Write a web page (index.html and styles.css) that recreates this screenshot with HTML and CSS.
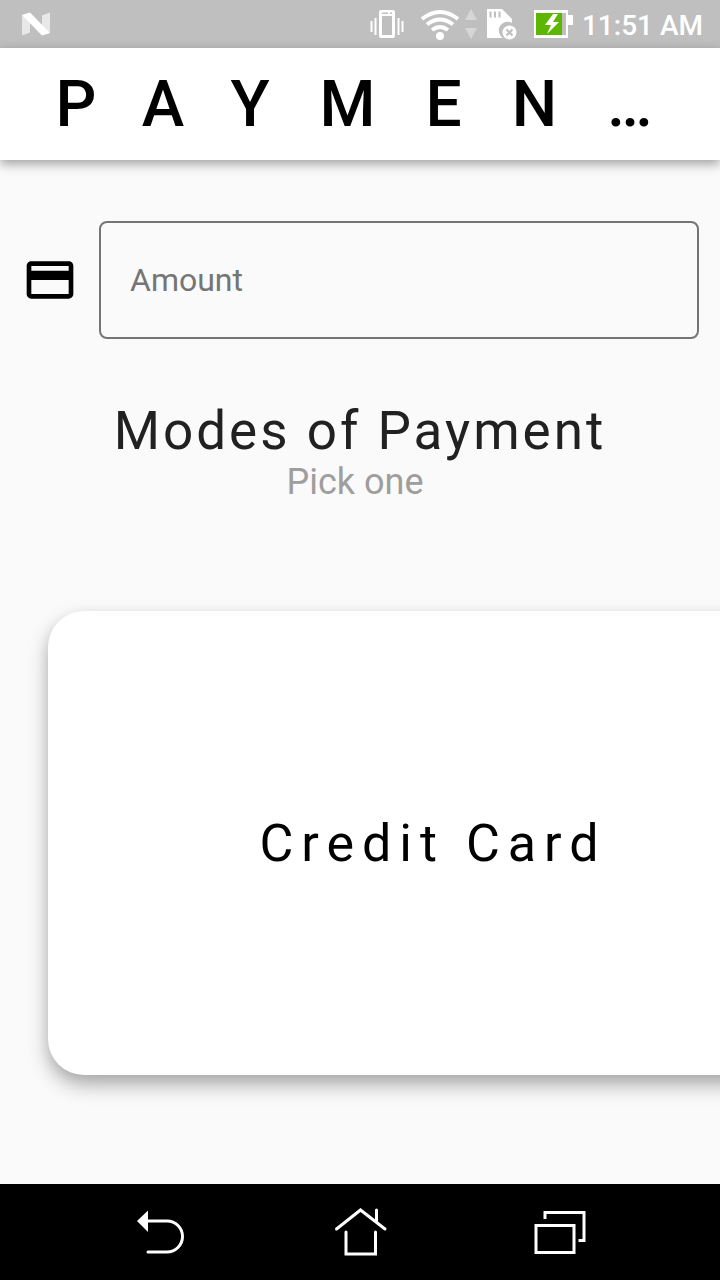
FILE: index.html
```html
<!DOCTYPE html>
<html lang="en">
<head>
<meta charset="utf-8">
<meta name="viewport" content="width=device-width, initial-scale=1">
<title>Payment</title>
<link rel="stylesheet" href="styles.css">
</head>
<body>
<div class="screen">
  <div class="status">
    <svg class="status-logo" width="28" height="24" viewBox="0 0 28 24" aria-hidden="true">
      <path d="M0 3v20.500l8-3V5zM28 .5v20.500l-8-5V3.500z" fill="#e8e8e8"/>
      <path d="M0 3L8 .5l20 20.500-8 2.500z" fill="#fff"/>
    </svg>
    <svg class="status-icons" width="206" height="36" viewBox="0 0 206 36" aria-hidden="true">
      <g fill="#fff">
        <path fill-rule="evenodd" d="M11 4h12a2 2 0 0 1 2 2v24a2 2 0 0 1-2 2H11a2 2 0 0 1-2-2V6a2 2 0 0 1 2-2zm1 6v19h10V10zm0-3.500v1.500h6V6.500zm8 0v1.500h2V6.500z"/>
        <path d="M4.500 12h2v17h-2zM.5 15h2v11h-2zM27.500 12h2v17h-2zM31.500 15h2v11h-2z"/>
        <circle cx="70" cy="30" r="4"/>
        <path d="M117 3h15l10 10v4a8 8 0 0 0-9 15h-16z"/>
        <circle cx="139.500" cy="26.500" r="7"/>
        <path fill-rule="evenodd" d="M164 4h34v5h5v10h-5v13h-34V4zm2 3v22h30V7z"/>
      </g>
      <g fill="none" stroke="#fff" stroke-width="4">
        <path d="M52 13q18-14 36 0M57 18.500q13-10 26 0M62 24q8-6 16 0"/>
      </g>
      <path d="M101 3l6 11H95zM95 22h12l-6 11z" fill="#d6d6d6"/>
      <path d="M120.500 5.500v6M125 5.500v6M129.500 5.500v6" stroke="#bfbfbf" stroke-width="2"/>
      <path d="M136.500 23.500l6 6m0-6l-6 6" stroke="#bfbfbf" stroke-width="2"/>
      <path d="M166 7h26v22h-26z" fill="#5db700"/>
      <path d="M183 8l-8 11h6l-4 9 12-12h-6l5-8z" fill="#fff"/>
    </svg>
    <span class="time">11:51 AM</span>
  </div>
  <header class="appbar"><h1 class="title">PAYMEN…</h1></header>
  <main class="content">
    <div class="field">
      <svg class="field-icon" width="56" height="56" viewBox="0 0 24 24" aria-hidden="true">
        <path d="M20 4H4c-1.110 0-1.990.89-1.990 2L2 18c0 1.110.89 2 2 2h16c1.110 0 2-.89 2-2V6c0-1.110-.89-2-2-2zm0 14H4v-6h16v6zm0-10H4V6h16v2z"/>
      </svg>
      <input class="amount" type="text" inputmode="decimal" placeholder="Amount" aria-label="Amount">
    </div>
    <h2 class="heading">Modes of Payment</h2>
    <p class="hint">Pick one</p>
    <div class="carousel">
      <button class="card" type="button">Credit Card</button>
    </div>
  </main>
  <nav class="navbar">
    <button class="nav-button" type="button" aria-label="Back">
      <svg width="56" height="56" viewBox="0 0 56 56" aria-hidden="true">
        <path d="M5 19L16 8.500v21.500z" fill="#fff"/>
        <path d="M15 19h20a15.500 15.500 0 0 1 0 31H16" fill="none" stroke="#fff" stroke-width="3" stroke-linecap="round"/>
      </svg>
    </button>
    <button class="nav-button" type="button" aria-label="Home">
      <svg width="56" height="56" viewBox="0 0 56 56" aria-hidden="true">
        <path d="M4.500 27L28.500 8 53 27M44.500 8v12M14 30v22h29.500V30" fill="none" stroke="#fff" stroke-width="3" stroke-linecap="round"/>
      </svg>
    </button>
    <button class="nav-button" type="button" aria-label="Recent apps">
      <svg width="56" height="56" viewBox="0 0 56 56" aria-hidden="true">
        <path d="M4 23.500h38v27H4zM13 17v-6.500h39v28h-5.500" fill="none" stroke="#fff" stroke-width="3"/>
      </svg>
    </button>
  </nav>
</div>
</body>
</html>
```
FILE: styles.css
```css
* {
  box-sizing: border-box;
}

body {
  margin: 0;
  font-family: Roboto, "Liberation Sans", sans-serif;
}

.screen {
  display: flex;
  flex-direction: column;
  min-height: 100vh;
  background: #fafafa;
}

.status {
  display: flex;
  align-items: center;
  height: 48px;
  padding: 0 17px 0 22px;
  background: #bfbfbf;
  color: #fff;
}

.status-icons {
  margin-left: auto;
}

.time {
  margin-left: 6px;
  font-size: 28px;
  font-weight: 500;
  line-height: 32px;
  padding-top: 4px;
}

.appbar {
  z-index: 1;
  display: flex;
  align-items: center;
  justify-content: center;
  height: 112px;
  padding-top: 2px;
  background: #fff;
  box-shadow: 0 4px 12px rgba(0, 0, 0, 0.24), 0 4px 8px rgba(0, 0, 0, 0.14);
}

.title {
  margin: 0;
  padding-left: 38px;
  font-size: 64px;
  font-weight: 500;
  line-height: 76px;
  letter-spacing: 50px;
  white-space: nowrap;
  color: #000;
}

.content {
  flex: 1;
  overflow: hidden;
  padding-top: 61px;
}

.field {
  display: flex;
  align-items: center;
  gap: 21px;
  padding: 0 21px 0 22px;
}

.field-icon {
  flex: none;
}

.amount {
  flex: 1;
  min-width: 0;
  height: 118px;
  padding: 0 29px;
  border: 2px solid #757575;
  border-radius: 8px;
  background: transparent;
  font: inherit;
  font-size: 32px;
  color: #212121;
}

.amount::placeholder {
  color: #757575;
  opacity: 1;
}

.heading {
  margin: 61px 0 0;
  font-size: 53px;
  font-weight: 400;
  line-height: 62px;
  letter-spacing: 3px;
  text-align: center;
  color: #212121;
}

.hint {
  margin: 0;
  padding-right: 10px;
  font-size: 36px;
  line-height: 40px;
  text-align: center;
  color: #9e9e9e;
}

.carousel {
  display: flex;
  padding: 109px 0 109px 48px;
}

.card {
  flex: 0 0 calc(100% + 98px);
  height: 464px;
  padding: 0;
  border: 0;
  border-radius: 36px;
  background: #fff;
  box-shadow: 0 10px 20px rgba(0, 0, 0, 0.3), 0 4px 12px rgba(0, 0, 0, 0.06);
  font: inherit;
  font-size: 52px;
  letter-spacing: 8px;
  color: #000;
}

.navbar {
  display: flex;
  justify-content: center;
  gap: 144px;
  height: 96px;
  padding-bottom: 4px;
  background: #000;
}

.nav-button {
  display: flex;
  align-items: center;
  padding: 0;
  border: 0;
  background: none;
}
```
